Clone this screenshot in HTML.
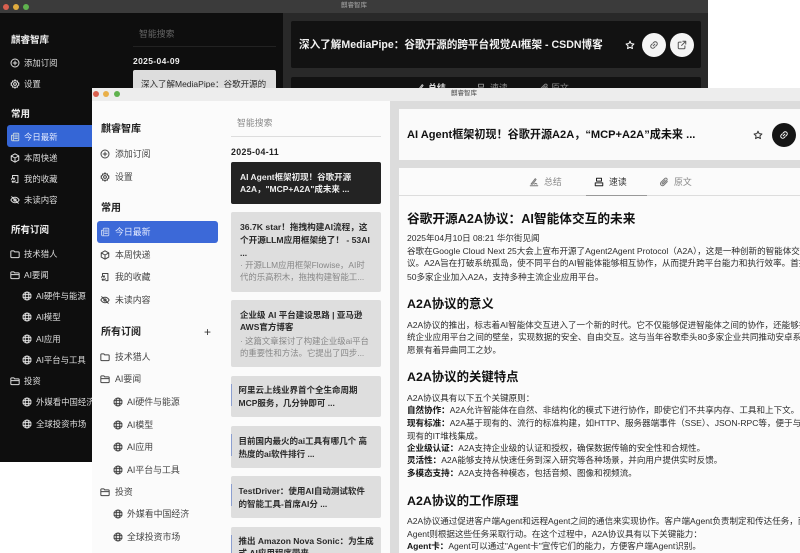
<!DOCTYPE html>
<html lang="zh"><head><meta charset="utf-8"><title>麒睿智库</title>
<style>
html,body{margin:0;padding:0;background:#fff}
body{width:800px;height:553px;position:relative;overflow:hidden;font-family:"Liberation Sans","Noto Sans CJK SC",sans-serif}
#all{position:absolute;left:0;top:0;width:800px;height:553px;filter:blur(.35px)}
.w,.b{position:absolute}
.t{position:absolute;white-space:nowrap;height:14px;line-height:14px;font-size:8.9px}
.b{box-sizing:border-box}
.s{font-weight:700;font-size:10px}
.c{font-weight:700;font-size:8.5px;color:#2a2a2a}
.d{font-size:8.4px;color:#888}
.p{font-size:8.55px;color:#2c2c2c}
.p b{font-weight:700;color:#111}
.h{font-weight:700;font-size:12.4px;color:#111}
svg.i{position:absolute;width:10px;height:10px;fill:none;stroke:currentColor;stroke-width:1.2;stroke-linecap:round;stroke-linejoin:round}
.dk{color:#ddd}.lt{color:#444}
.t.dk{font-size:8.4px}
</style></head><body><div id="all">
<svg width="0" height="0" style="position:absolute">
<defs>
<symbol id="plus" viewBox="0 0 12 12"><circle cx="6" cy="6" r="4.8"/><path d="M6 3.8v4.4M3.8 6h4.4"/></symbol>
<symbol id="gear" viewBox="0 0 12 12"><path d="M6 1l1 1.5 1.8-.3.4 1.8L10.8 5 10 6l.8 1.1-1.600 1-.4 1.800L7 9.600 6 11 5 9.600l-1.800.3-.4-1.800-1.600-1L2 6l-.8-1 1.600-1 .4-1.800L5 2.500z"/><circle cx="6" cy="6" r="1.700"/></symbol>
<symbol id="news" viewBox="0 0 12 12"><rect x="4" y="1.500" width="6.500" height="9" rx="1"/><path d="M4 4H1.800v5.200A1.300 1.300 0 0 0 3.100 10.500H4M5.600 3.800h3.300M5.600 5.800h3.300M5.600 7.800h3.300"/></symbol>
<symbol id="cube" viewBox="0 0 12 12"><path d="M6 1l4.500 2.500v5L6 11 1.500 8.500v-5zM1.500 3.500L6 6l4.500-2.500M6 6v5"/></symbol>
<symbol id="book" viewBox="0 0 12 12"><path d="M3 4V1.800h6.500v8.500H7M1.800 6.500A2 2 0 0 1 5.500 6L5 4.500M5.500 6H4M6.300 8A2 2 0 0 1 2.500 8.500l.5 1.500M2.500 8.500H4"/></symbol>
<symbol id="eye" viewBox="0 0 12 12"><path d="M1 6c1.500-2.500 3-3.300 5-3.300S9.500 3.500 11 6c-1.500 2.500-3 3.300-5 3.300S2.500 8.500 1 6zM2 2l8 8"/><circle cx="6" cy="6" r="1.400"/></symbol>
<symbol id="folder" viewBox="0 0 12 12"><path d="M1 3.200c0-.6.4-1 1-1h2.600l1 1.300H10c.6 0 1 .4 1 1v4.800c0 .6-.4 1-1 1H2c-.6 0-1-.4-1-1z"/></symbol>
<symbol id="open" viewBox="0 0 12 12"><path d="M1 9V3.200c0-.6.4-1 1-1h2.600l1 1.300H10c.6 0 1 .4 1 1v4.800c0 .6-.4 1-1 1H2c-.6 0-1-.4-1-1zM1 5.500h10"/></symbol>
<symbol id="globe" viewBox="0 0 12 12"><circle cx="6" cy="6" r="4.800"/><ellipse cx="6" cy="6" rx="2.100" ry="4.800"/><path d="M1.300 4.400h9.400M1.300 7.600h9.400"/></symbol>
<symbol id="star" viewBox="0 0 12 12"><path d="M6 1.400l1.400 3 3.300.4-2.400 2.200.6 3.300L6 8.700l-2.900 1.600.6-3.300L1.300 4.800l3.300-.4z"/></symbol>
<symbol id="link" viewBox="0 0 12 12"><path d="M5 7l2-2M4.800 3.800l1-1a2 2 0 0 1 3.400 3.400l-1 1M7.200 8.200l-1 1a2 2 0 0 1-3.400-3.400l1-1"/></symbol>
<symbol id="ext" viewBox="0 0 12 12"><path d="M9.500 7v2.500a1 1 0 0 1-1 1h-6a1 1 0 0 1-1-1v-6a1 1 0 0 1 1-1H5M7 1.500h3.500V5M10.500 1.500L5.500 6.500"/></symbol>
<symbol id="sign" viewBox="0 0 12 12"><path d="M1.500 10.500h9M2.500 8.500L7.500 2l1 1-4 5.500zM6.500 8.500c1-1 2-1 3 0"/></symbol>
<symbol id="read" viewBox="0 0 12 12"><rect x="3" y="1.500" width="6" height="3.500"/><rect x="1.500" y="7" width="9" height="3.500"/></symbol>
<symbol id="clip" viewBox="0 0 12 12"><path d="M10 5.500L6 9.700a2.400 2.400 0 0 1-3.500-3.400L7 1.800a1.600 1.600 0 0 1 2.300 2.300L5 8.400a.8.8 0 0 1-1.100-1.100L7.500 3.700"/></symbol>
</defs></svg>

<!-- DARK WINDOW -->
<div class="w" style="left:0;top:0;width:708px;height:462px;background:#0e0e0e;overflow:hidden">
 <div class="b" style="left:0;top:0;width:708px;height:13px;background:#3b3b3b"></div>
 <div class="b" style="left:3px;top:3.500px;width:6px;height:6px;border-radius:50%;background:#d9604f"></div>
 <div class="b" style="left:13px;top:3.500px;width:6px;height:6px;border-radius:50%;background:#e0ac3e"></div>
 <div class="b" style="left:23px;top:3.500px;width:6px;height:6px;border-radius:50%;background:#5fb24e"></div>
 <div class="t" style="left:341px;top:-1px;font-size:6.500px;color:#aaa">麒睿智库</div>
 <div class="b" style="left:283px;top:13px;width:425px;height:449px;background:#292929"></div>
 <div class="b" style="left:291px;top:21px;width:410px;height:47px;background:#121212;border-radius:2px"></div>
 <div class="b" style="left:291px;top:77px;width:410px;height:60px;background:#121212;border-radius:2px"></div>
 <div class="t s" style="left:11px;top:34px;color:#eee;font-size:9.500px">麒睿智库</div>
 <svg class="i dk" style="left:10px;top:58px"><use href="#plus"/></svg><div class="t dk" style="left:24px;top:56px">添加订阅</div>
 <svg class="i dk" style="left:10px;top:79px"><use href="#gear"/></svg><div class="t dk" style="left:24px;top:77px">设置</div>
 <div class="t s" style="left:11px;top:108px;color:#eee;font-size:9.500px">常用</div>
 <div class="b" style="left:7px;top:125px;width:90px;height:22px;background:#3566d6;border-radius:3px"></div>
 <svg class="i" style="left:10px;top:132px;color:#bcd"><use href="#news"/></svg><div class="t" style="left:24px;top:130px;color:#e6ecff;font-size:8.400px">今日最新</div>
 <svg class="i dk" style="left:10px;top:153px"><use href="#cube"/></svg><div class="t dk" style="left:24px;top:151px">本周快递</div>
 <svg class="i dk" style="left:10px;top:174px"><use href="#book"/></svg><div class="t dk" style="left:24px;top:172px">我的收藏</div>
 <svg class="i dk" style="left:10px;top:195px"><use href="#eye"/></svg><div class="t dk" style="left:24px;top:193px">未读内容</div>
 <div class="t s" style="left:11px;top:224px;color:#eee;font-size:9.500px">所有订阅</div>
 <svg class="i dk" style="left:10px;top:249px"><use href="#folder"/></svg><div class="t dk" style="left:24px;top:247px">技术猎人</div>
 <svg class="i dk" style="left:10px;top:270px"><use href="#open"/></svg><div class="t dk" style="left:24px;top:268px">AI要闻</div>
 <svg class="i dk" style="left:22px;top:291px"><use href="#globe"/></svg><div class="t dk" style="left:36px;top:289px">AI硬件与能源</div>
 <svg class="i dk" style="left:22px;top:312px"><use href="#globe"/></svg><div class="t dk" style="left:36px;top:310px">AI模型</div>
 <svg class="i dk" style="left:22px;top:334px"><use href="#globe"/></svg><div class="t dk" style="left:36px;top:332px">AI应用</div>
 <svg class="i dk" style="left:22px;top:355px"><use href="#globe"/></svg><div class="t dk" style="left:36px;top:353px">AI平台与工具</div>
 <svg class="i dk" style="left:10px;top:376px"><use href="#open"/></svg><div class="t dk" style="left:24px;top:374px">投资</div>
 <svg class="i dk" style="left:22px;top:397px"><use href="#globe"/></svg><div class="t dk" style="left:36px;top:395px">外媒看中国经济</div>
 <svg class="i dk" style="left:22px;top:419px"><use href="#globe"/></svg><div class="t dk" style="left:36px;top:417px">全球投资市场</div>
 <div class="t" style="left:139px;top:27px;color:#666">智能搜索</div>
 <div class="b" style="left:133px;top:46px;width:143px;height:1px;background:#222"></div>
 <div class="t" style="left:133px;top:54px;color:#eee;font-weight:700;font-size:8.500px;letter-spacing:.35px">2025-04-09</div>
 <div class="b" style="left:133px;top:70px;width:143px;height:40px;background:#ddd;border-radius:2px"></div>
 <div class="t c" style="left:141px;top:77px;font-weight:400">深入了解MediaPipe：谷歌开源的</div>
 <div class="t" style="left:299px;top:38px;color:#f2f2f2;font-weight:700;font-size:10.600px">深入了解MediaPipe：谷歌开源的跨平台视觉AI框架 - CSDN博客</div>
 <svg class="i" style="left:625px;top:40px;color:#fff"><use href="#star"/></svg>
 <div class="b" style="left:642px;top:33px;width:24px;height:24px;border-radius:50%;background:#f5f5f5"></div>
 <svg class="i" style="left:649px;top:40px;color:#555"><use href="#link"/></svg>
 <div class="b" style="left:670px;top:33px;width:24px;height:24px;border-radius:50%;background:#f5f5f5"></div>
 <svg class="i" style="left:677px;top:40px;color:#555"><use href="#ext"/></svg>
 <svg class="i" style="left:416px;top:83px;color:#ccc"><use href="#sign"/></svg>
 <div class="t" style="left:428px;top:81px;color:#ddd;font-weight:700">总结</div>
 <svg class="i" style="left:476px;top:83px;color:#888"><use href="#read"/></svg>
 <div class="t" style="left:490px;top:81px;color:#888">速读</div>
 <svg class="i" style="left:539px;top:83px;color:#888"><use href="#clip"/></svg>
 <div class="t" style="left:551px;top:81px;color:#888">原文</div>
</div>

<!-- LIGHT WINDOW -->
<div class="w" style="left:92px;top:88px;width:708px;height:465px;background:#fbfbfb;overflow:hidden"></div>
<div class="w" style="left:0;top:0;width:800px;height:553px;overflow:hidden">
 <div class="b" style="left:92px;top:88px;width:708px;height:13px;background:#ededed"></div>
 <div class="b" style="left:93px;top:91px;width:6px;height:6px;border-radius:50%;background:#d9604f"></div>
 <div class="b" style="left:103px;top:91px;width:6px;height:6px;border-radius:50%;background:#e9b04a"></div>
 <div class="b" style="left:114px;top:91px;width:6px;height:6px;border-radius:50%;background:#5fb24e"></div>
 <div class="t" style="left:451px;top:87px;font-size:6.500px;color:#444">麒睿智库</div>
 <div class="b" style="left:390px;top:101px;width:410px;height:452px;background:#dcdcdc"></div>
 <div class="b" style="left:399px;top:109px;width:401px;height:51px;background:#fafafa"></div>
 <div class="b" style="left:399px;top:168px;width:401px;height:385px;background:#fbfbfb"></div>

 <div class="t s" style="left:101px;top:123px;color:#222">麒睿智库</div>
 <svg class="i lt" style="left:100px;top:149px"><use href="#plus"/></svg><div class="t lt" style="left:115px;top:147px">添加订阅</div>
 <svg class="i lt" style="left:100px;top:172px"><use href="#gear"/></svg><div class="t lt" style="left:115px;top:170px">设置</div>
 <div class="t s" style="left:101px;top:202px;color:#222">常用</div>
 <div class="b" style="left:97px;top:221px;width:121px;height:22px;background:#3c69d8;border-radius:3px"></div>
 <svg class="i" style="left:100px;top:227px;color:#b9c9ef"><use href="#news"/></svg><div class="t" style="left:115px;top:225px;color:#e3eaff">今日最新</div>
 <svg class="i lt" style="left:100px;top:250px"><use href="#cube"/></svg><div class="t lt" style="left:115px;top:248px">本周快递</div>
 <svg class="i lt" style="left:100px;top:272px"><use href="#book"/></svg><div class="t lt" style="left:115px;top:270px">我的收藏</div>
 <svg class="i lt" style="left:100px;top:295px"><use href="#eye"/></svg><div class="t lt" style="left:115px;top:293px">未读内容</div>
 <div class="t s" style="left:101px;top:326px;color:#222">所有订阅</div>
 <div class="t" style="left:204px;top:325px;font-size:12px;color:#333">+</div>
 <svg class="i lt" style="left:100px;top:352px"><use href="#folder"/></svg><div class="t lt" style="left:115px;top:350px">技术猎人</div>
 <svg class="i lt" style="left:100px;top:374px"><use href="#open"/></svg><div class="t lt" style="left:115px;top:372px">AI要闻</div>
 <svg class="i lt" style="left:113px;top:397px"><use href="#globe"/></svg><div class="t lt" style="left:127px;top:395px">AI硬件与能源</div>
 <svg class="i lt" style="left:113px;top:420px"><use href="#globe"/></svg><div class="t lt" style="left:127px;top:418px">AI模型</div>
 <svg class="i lt" style="left:113px;top:442px"><use href="#globe"/></svg><div class="t lt" style="left:127px;top:440px">AI应用</div>
 <svg class="i lt" style="left:113px;top:465px"><use href="#globe"/></svg><div class="t lt" style="left:127px;top:463px">AI平台与工具</div>
 <svg class="i lt" style="left:100px;top:487px"><use href="#open"/></svg><div class="t lt" style="left:115px;top:485px">投资</div>
 <svg class="i lt" style="left:113px;top:509px"><use href="#globe"/></svg><div class="t lt" style="left:127px;top:507px">外媒看中国经济</div>
 <svg class="i lt" style="left:113px;top:532px"><use href="#globe"/></svg><div class="t lt" style="left:127px;top:530px">全球投资市场</div>

 <div class="t" style="left:237px;top:116px;color:#888">智能搜索</div>
 <div class="b" style="left:231px;top:136px;width:150px;height:1px;background:#ddd"></div>
 <div class="t" style="left:231px;top:145px;color:#222;font-weight:700;font-size:8.800px;letter-spacing:.35px">2025-04-11</div>

 <div class="b" style="left:231px;top:162px;width:150px;height:42px;background:#232323;border-radius:2px"></div>
 <div class="t c" style="left:240px;top:170px;color:#eee">AI Agent框架初现！谷歌开源</div>
 <div class="t c" style="left:240px;top:182px;color:#eee">A2A，"MCP+A2A"成未来 ...</div>

 <div class="b" style="left:231px;top:212px;width:150px;height:80px;background:#dedede;border-radius:2px"></div>
 <div class="t c" style="left:240px;top:220px;font-size:8.650px">36.7K star！拖拽构建AI流程，这</div>
 <div class="t c" style="left:240px;top:233px;font-size:8.650px">个开源LLM应用框架绝了！ - 53AI</div>
 <div class="t c" style="left:240px;top:246px">...</div>
 <div class="t d" style="left:240px;top:258px">· 开源LLM应用框架Flowise，AI时</div>
 <div class="t d" style="left:240px;top:270px">代的乐高积木，拖拽构建智能工...</div>

 <div class="b" style="left:231px;top:300px;width:150px;height:67px;background:#dedede;border-radius:2px"></div>
 <div class="t c" style="left:240px;top:308px">企业级 AI 平台建设思路 | 亚马逊</div>
 <div class="t c" style="left:240px;top:320px">AWS官方博客</div>
 <div class="t d" style="left:240px;top:334px">· 这篇文章探讨了构建企业级ai平台</div>
 <div class="t d" style="left:240px;top:346px">的重要性和方法。它提出了四步...</div>

 <div class="b" style="left:231px;top:376px;width:150px;height:41px;background:#dedede;border-radius:2px"></div>
 <div class="b" style="left:231px;top:384px;width:1px;height:22px;background:#8c9fd0"></div>
 <div class="t c" style="left:238.500px;top:383px">阿里云上线业界首个全生命周期</div>
 <div class="t c" style="left:238.500px;top:396px">MCP服务，几分钟即可 ...</div>

 <div class="b" style="left:231px;top:426px;width:150px;height:42px;background:#dedede;border-radius:2px"></div>
 <div class="b" style="left:231px;top:434px;width:1px;height:22px;background:#8c9fd0"></div>
 <div class="t c" style="left:238.500px;top:434px">目前国内最火的ai工具有哪几个 高</div>
 <div class="t c" style="left:238.500px;top:446.500px">热度的ai软件排行 ...</div>

 <div class="b" style="left:231px;top:476px;width:150px;height:42px;background:#dedede;border-radius:2px"></div>
 <div class="b" style="left:231px;top:484px;width:1px;height:22px;background:#8c9fd0"></div>
 <div class="t c" style="left:238.500px;top:484px">TestDriver：使用AI自动测试软件</div>
 <div class="t c" style="left:238.500px;top:497px">的智能工具-首席AI分 ...</div>

 <div class="b" style="left:231px;top:527px;width:150px;height:30px;background:#dedede;border-radius:2px"></div>
 <div class="b" style="left:231px;top:535px;width:1px;height:22px;background:#8c9fd0"></div>
 <div class="t c" style="left:238.500px;top:534px">推出 Amazon Nova Sonic：为生成</div>
 <div class="t c" style="left:238.500px;top:546px">式 AI应用程序带来</div>

 <div class="t" style="left:407px;top:128px;color:#111;font-weight:700;font-size:11.100px">AI Agent框架初现！谷歌开源A2A，“MCP+A2A”成未来 ...</div>
 <svg class="i" style="left:753px;top:130px;color:#333"><use href="#star"/></svg>
 <div class="b" style="left:772px;top:123px;width:24px;height:24px;border-radius:50%;background:#151515"></div>
 <svg class="i" style="left:779px;top:130px;color:#fff"><use href="#link"/></svg>

 <svg class="i" style="left:529px;top:177px;color:#777"><use href="#sign"/></svg><div class="t" style="left:544px;top:175px;color:#888">总结</div>
 <svg class="i" style="left:594px;top:177px;color:#222"><use href="#read"/></svg><div class="t" style="left:609px;top:175px;color:#333">速读</div>
 <svg class="i" style="left:659px;top:177px;color:#777"><use href="#clip"/></svg><div class="t" style="left:674px;top:175px;color:#888">原文</div>
 <div class="b" style="left:399px;top:195px;width:401px;height:1px;background:#ddd"></div>
 <div class="b" style="left:586px;top:195px;width:61px;height:1px;background:#999"></div>

 <div class="t h" style="left:407px;top:212px;font-size:12.700px">谷歌开源A2A协议：AI智能体交互的未来</div>
 <div class="t p" style="left:407px;top:231px">2025年04月10日 08:21 华尔街见闻</div>
 <div class="t p" style="left:407px;top:243.500px">谷歌在Google Cloud Next 25大会上宣布开源了Agent2Agent Protocol（A2A），这是一种创新的智能体交互协</div>
 <div class="t p" style="left:407px;top:256px">议。A2A旨在打破系统孤岛，使不同平台的AI智能体能够相互协作，从而提升跨平台能力和执行效率。首批已有</div>
 <div class="t p" style="left:407px;top:270px">50多家企业加入A2A，支持多种主流企业应用平台。</div>

 <div class="t h" style="left:407px;top:297px">A2A协议的意义</div>
 <div class="t p" style="left:407px;top:318px">A2A协议的推出，标志着AI智能体交互进入了一个新的时代。它不仅能够促进智能体之间的协作，还能够打破传</div>
 <div class="t p" style="left:407px;top:330px">统企业应用平台之间的壁垒，实现数据的安全、自由交互。这与当年谷歌牵头80多家企业共同推动安卓系统的</div>
 <div class="t p" style="left:407px;top:343px">愿景有着异曲同工之妙。</div>

 <div class="t h" style="left:407px;top:370px">A2A协议的关键特点</div>
 <div class="t p" style="left:407px;top:391px">A2A协议具有以下五个关键原则：</div>
 <div class="t p" style="left:407px;top:403px"><b>自然协作：</b>A2A允许智能体在自然、非结构化的模式下进行协作，即使它们不共享内存、工具和上下文。</div>
 <div class="t p" style="left:407px;top:416px"><b>现有标准：</b>A2A基于现有的、流行的标准构建，如HTTP、服务器端事件（SSE）、JSON-RPC等，便于与企业</div>
 <div class="t p" style="left:407px;top:429px">现有的IT堆栈集成。</div>
 <div class="t p" style="left:407px;top:441px"><b>企业级认证：</b>A2A支持企业级的认证和授权，确保数据传输的安全性和合规性。</div>
 <div class="t p" style="left:407px;top:453px"><b>灵活性：</b>A2A能够支持从快速任务到深入研究等各种场景，并向用户提供实时反馈。</div>
 <div class="t p" style="left:407px;top:466px"><b>多模态支持：</b>A2A支持各种模态，包括音频、图像和视频流。</div>

 <div class="t h" style="left:407px;top:494px">A2A协议的工作原理</div>
 <div class="t p" style="left:407px;top:514px">A2A协议通过促进客户端Agent和远程Agent之间的通信来实现协作。客户端Agent负责制定和传达任务，而远程</div>
 <div class="t p" style="left:407px;top:526.500px">Agent则根据这些任务采取行动。在这个过程中，A2A协议具有以下关键能力：</div>
 <div class="t p" style="left:407px;top:539px"><b>Agent卡：</b>Agent可以通过"Agent卡"宣传它们的能力，方便客户端Agent识别。</div>
</div>
</div></body></html>
